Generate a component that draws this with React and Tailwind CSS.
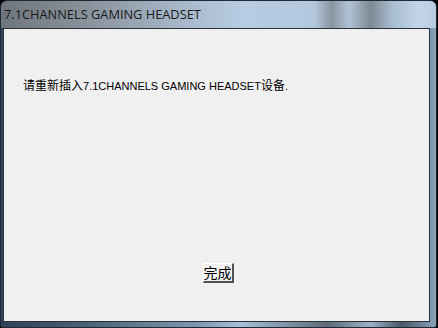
import React from "react";

const FONT = '"Liberation Sans", "Noto Sans CJK SC", sans-serif';

export default function App() {
  return (
    <div className="w-[438px] h-[328px] bg-black">
      <div className="w-[437px] h-[328px] flex flex-col rounded-t-[7px] rounded-b-[3px] bg-[linear-gradient(90deg,#2f4257_0%,#4e6276_20%,#7d96ae_45%,#a8c0d8_55%,#5d6a76_75%,#9fb3c6_85%,#4a5866_92%,#8aa2ba_100%)] border border-[#1e2a36] overflow-hidden">
        {/* title bar */}
        <div className="h-[27px] shrink-0 flex items-center pl-[3px] bg-[linear-gradient(90deg,#6f757c_0%,#878f98_18%,#a2b2c2_38%,#b7cce3_55%,#b3c8df_72%,#8a959e_76%,#b0c3d6_80%,#7f8a93_85%,#a9bdd1_90%,#c2d5e8_96%,#b8cbe0_100%)]">
          <span className="text-[12.8px] text-[#1a1a1a]" style={{ fontFamily: '"Open Sans", "Noto Sans", sans-serif' }}>
            7.1CHANNELS GAMING HEADSET
          </span>
        </div>
        {/* client area */}
        <div className="flex-1 flex pl-[2px] pr-[6px] pb-[5px]">
          <div className="flex-1 flex flex-col border border-[#26323d] bg-[#f0f0f0]" style={{ fontFamily: FONT }}>
            <p className="mt-[50px] ml-[19px] text-[12px] text-black leading-[14px]">
              请重新插入<span className="text-[11px]">7.1CHANNELS GAMING HEADSET</span>设备<span className="text-[11px]">.</span>
            </p>
            <div className="flex-1" />
            <div className="flex justify-center pl-[3px] mb-[38px]">
              <button className="w-[31px] h-[20px] flex items-center justify-center bg-[#f0f0f0] border-t border-l border-t-white border-l-white border-b-[2px] border-r-[2px] border-b-[#505050] border-r-[#505050] text-[14px] leading-none text-black">
                完成
              </button>
            </div>
          </div>
        </div>
      </div>
    </div>
  );
}
